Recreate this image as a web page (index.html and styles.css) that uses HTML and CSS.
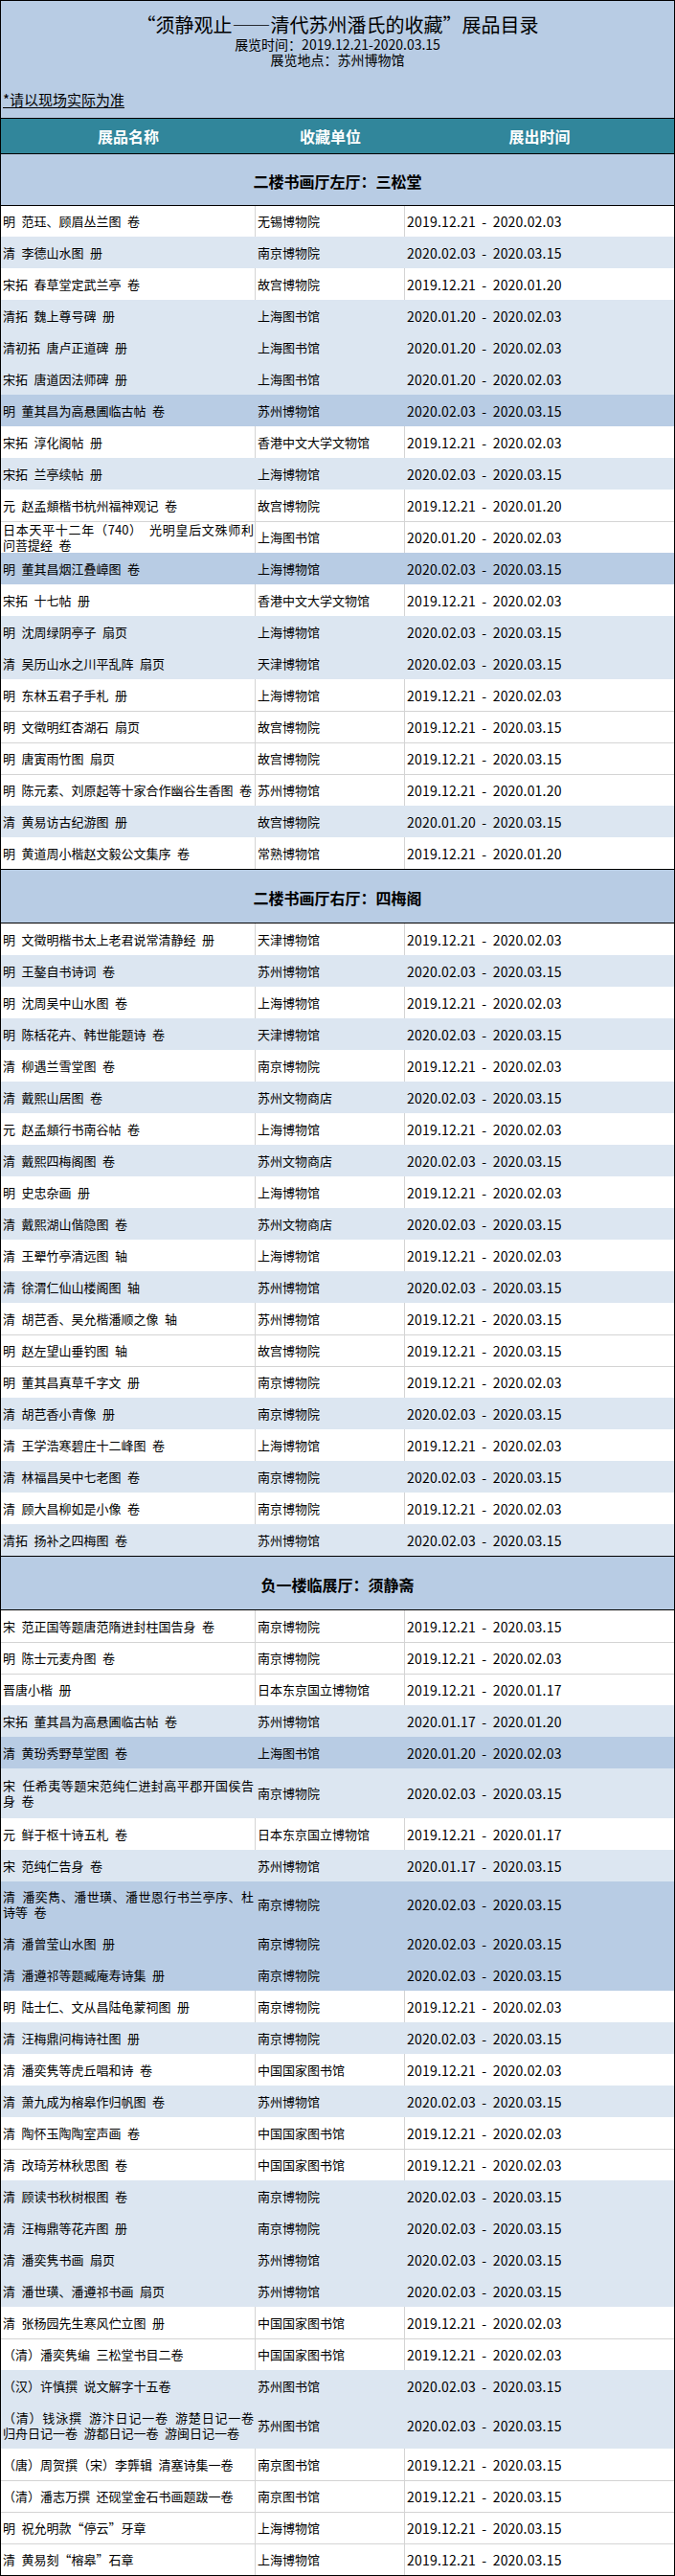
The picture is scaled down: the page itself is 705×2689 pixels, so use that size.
FILE: index.html
```html
<!DOCTYPE html>
<html lang="zh-CN">
<head>
<meta charset="utf-8">
<title>须静观止——清代苏州潘氏的收藏 展品目录</title>
<link rel="stylesheet" href="styles.css">
</head>
<body>
<div class="sheet">
  <div class="top">
    <div class="title">“须静观止——清代苏州潘氏的收藏”展品目录</div>
    <div class="sub">展览时间：2019.12.21-2020.03.15</div>
    <div class="sub">展览地点：苏州博物馆</div>
    <div class="note">*请以现场实际为准</div>
  </div>
  <div class="colhead"><div>展品名称</div><div>收藏单位</div><div>展出时间</div></div>

  <div class="sec s1">二楼书画厅左厅：三松堂</div>
  <div class="r w first"><div class="c n">明 范珏、顾眉丛兰图 卷</div><div class="c o">无锡博物院</div><div class="c d">2019.12.21 - 2020.02.03</div></div>
  <div class="r l"><div class="c n">清 李德山水图 册</div><div class="c o">南京博物院</div><div class="c d">2020.02.03 - 2020.03.15</div></div>
  <div class="r w"><div class="c n">宋拓 春草堂定武兰亭 卷</div><div class="c o">故宫博物院</div><div class="c d">2019.12.21 - 2020.01.20</div></div>
  <div class="r l"><div class="c n">清拓 魏上尊号碑 册</div><div class="c o">上海图书馆</div><div class="c d">2020.01.20 - 2020.02.03</div></div>
  <div class="r l"><div class="c n">清初拓 唐卢正道碑 册</div><div class="c o">上海图书馆</div><div class="c d">2020.01.20 - 2020.02.03</div></div>
  <div class="r l"><div class="c n">宋拓 唐道因法师碑 册</div><div class="c o">上海图书馆</div><div class="c d">2020.01.20 - 2020.02.03</div></div>
  <div class="r m"><div class="c n">明 董其昌为高悬圃临古帖 卷</div><div class="c o">苏州博物馆</div><div class="c d">2020.02.03 - 2020.03.15</div></div>
  <div class="r w"><div class="c n">宋拓 淳化阁帖 册</div><div class="c o">香港中文大学文物馆</div><div class="c d">2019.12.21 - 2020.02.03</div></div>
  <div class="r l"><div class="c n">宋拓 兰亭续帖 册</div><div class="c o">上海博物馆</div><div class="c d">2020.02.03 - 2020.03.15</div></div>
  <div class="r w"><div class="c n">元 赵孟頫楷书杭州福神观记 卷</div><div class="c o">故宫博物院</div><div class="c d">2019.12.21 - 2020.01.20</div></div>
  <div class="r w"><div class="c n j"><span>日本天平十二年（740） 光明皇后文殊师利</span><span>问菩提经 卷</span></div><div class="c o">上海图书馆</div><div class="c d">2020.01.20 - 2020.02.03</div></div>
  <div class="r m"><div class="c n">明 董其昌烟江叠嶂图 卷</div><div class="c o">上海博物馆</div><div class="c d">2020.02.03 - 2020.03.15</div></div>
  <div class="r w"><div class="c n">宋拓 十七帖 册</div><div class="c o">香港中文大学文物馆</div><div class="c d">2019.12.21 - 2020.02.03</div></div>
  <div class="r l"><div class="c n">明 沈周绿阴亭子 扇页</div><div class="c o">上海博物馆</div><div class="c d">2020.02.03 - 2020.03.15</div></div>
  <div class="r l"><div class="c n">清 吴历山水之川平乱阵 扇页</div><div class="c o">天津博物馆</div><div class="c d">2020.02.03 - 2020.03.15</div></div>
  <div class="r w"><div class="c n">明 东林五君子手札 册</div><div class="c o">上海博物馆</div><div class="c d">2019.12.21 - 2020.02.03</div></div>
  <div class="r w"><div class="c n">明 文徵明红杏湖石 扇页</div><div class="c o">故宫博物院</div><div class="c d">2019.12.21 - 2020.03.15</div></div>
  <div class="r w"><div class="c n">明 唐寅雨竹图 扇页</div><div class="c o">故宫博物院</div><div class="c d">2019.12.21 - 2020.03.15</div></div>
  <div class="r w"><div class="c n">明 陈元素、刘原起等十家合作幽谷生香图 卷</div><div class="c o">苏州博物馆</div><div class="c d">2019.12.21 - 2020.01.20</div></div>
  <div class="r l"><div class="c n">清 黄易访古纪游图 册</div><div class="c o">故宫博物院</div><div class="c d">2020.01.20 - 2020.03.15</div></div>
  <div class="r w"><div class="c n">明 黄道周小楷赵文毅公文集序 卷</div><div class="c o">常熟博物馆</div><div class="c d">2019.12.21 - 2020.01.20</div></div>

  <div class="sec s2">二楼书画厅右厅：四梅阁</div>
  <div class="r w"><div class="c n">明 文徵明楷书太上老君说常清静经 册</div><div class="c o">天津博物馆</div><div class="c d">2019.12.21 - 2020.02.03</div></div>
  <div class="r l"><div class="c n">明 王鏊自书诗词 卷</div><div class="c o">苏州博物馆</div><div class="c d">2020.02.03 - 2020.03.15</div></div>
  <div class="r w"><div class="c n">明 沈周吴中山水图 卷</div><div class="c o">上海博物馆</div><div class="c d">2019.12.21 - 2020.02.03</div></div>
  <div class="r l"><div class="c n">明 陈栝花卉、韩世能题诗 卷</div><div class="c o">天津博物馆</div><div class="c d">2020.02.03 - 2020.03.15</div></div>
  <div class="r w"><div class="c n">清 柳遇兰雪堂图 卷</div><div class="c o">南京博物院</div><div class="c d">2019.12.21 - 2020.02.03</div></div>
  <div class="r l"><div class="c n">清 戴熙山居图 卷</div><div class="c o">苏州文物商店</div><div class="c d">2020.02.03 - 2020.03.15</div></div>
  <div class="r w"><div class="c n">元 赵孟頫行书南谷帖 卷</div><div class="c o">上海博物馆</div><div class="c d">2019.12.21 - 2020.02.03</div></div>
  <div class="r l"><div class="c n">清 戴熙四梅阁图 卷</div><div class="c o">苏州文物商店</div><div class="c d">2020.02.03 - 2020.03.15</div></div>
  <div class="r w"><div class="c n">明 史忠杂画 册</div><div class="c o">上海博物馆</div><div class="c d">2019.12.21 - 2020.02.03</div></div>
  <div class="r l"><div class="c n">清 戴熙湖山偕隐图 卷</div><div class="c o">苏州文物商店</div><div class="c d">2020.02.03 - 2020.03.15</div></div>
  <div class="r w"><div class="c n">清 王翚竹亭清远图 轴</div><div class="c o">上海博物馆</div><div class="c d">2019.12.21 - 2020.02.03</div></div>
  <div class="r l"><div class="c n">清 徐渭仁仙山楼阁图 轴</div><div class="c o">苏州博物馆</div><div class="c d">2020.02.03 - 2020.03.15</div></div>
  <div class="r w"><div class="c n">清 胡芑香、吴允楷潘顺之像 轴</div><div class="c o">苏州博物馆</div><div class="c d">2019.12.21 - 2020.03.15</div></div>
  <div class="r w"><div class="c n">明 赵左望山垂钓图 轴</div><div class="c o">故宫博物院</div><div class="c d">2019.12.21 - 2020.03.15</div></div>
  <div class="r w"><div class="c n">明 董其昌真草千字文 册</div><div class="c o">南京博物院</div><div class="c d">2019.12.21 - 2020.02.03</div></div>
  <div class="r l"><div class="c n">清 胡芑香小青像 册</div><div class="c o">南京博物院</div><div class="c d">2020.02.03 - 2020.03.15</div></div>
  <div class="r w"><div class="c n">清 王学浩寒碧庄十二峰图 卷</div><div class="c o">上海博物馆</div><div class="c d">2019.12.21 - 2020.02.03</div></div>
  <div class="r l"><div class="c n">清 林福昌吴中七老图 卷</div><div class="c o">南京博物院</div><div class="c d">2020.02.03 - 2020.03.15</div></div>
  <div class="r w"><div class="c n">清 顾大昌柳如是小像 卷</div><div class="c o">南京博物院</div><div class="c d">2019.12.21 - 2020.02.03</div></div>
  <div class="r l"><div class="c n">清拓 扬补之四梅图 卷</div><div class="c o">苏州博物馆</div><div class="c d">2020.02.03 - 2020.03.15</div></div>

  <div class="sec s3">负一楼临展厅：须静斋</div>
  <div class="r w"><div class="c n">宋 范正国等题唐范隋进封柱国告身 卷</div><div class="c o">南京博物院</div><div class="c d">2019.12.21 - 2020.03.15</div></div>
  <div class="r w"><div class="c n">明 陈士元麦舟图 卷</div><div class="c o">南京博物院</div><div class="c d">2019.12.21 - 2020.02.03</div></div>
  <div class="r w"><div class="c n">晋唐小楷 册</div><div class="c o">日本东京国立博物馆</div><div class="c d">2019.12.21 - 2020.01.17</div></div>
  <div class="r l"><div class="c n">宋拓 董其昌为高悬圃临古帖 卷</div><div class="c o">苏州博物馆</div><div class="c d">2020.01.17 - 2020.01.20</div></div>
  <div class="r m"><div class="c n">清 黄玢秀野草堂图 卷</div><div class="c o">上海图书馆</div><div class="c d">2020.01.20 - 2020.02.03</div></div>
  <div class="r l h52"><div class="c n j"><span>宋 任希夷等题宋范纯仁进封高平郡开国侯告</span><span>身 卷</span></div><div class="c o">南京博物院</div><div class="c d">2020.02.03 - 2020.03.15</div></div>
  <div class="r w"><div class="c n">元 鲜于枢十诗五札 卷</div><div class="c o">日本东京国立博物馆</div><div class="c d">2019.12.21 - 2020.01.17</div></div>
  <div class="r l"><div class="c n">宋 范纯仁告身 卷</div><div class="c o">苏州博物馆</div><div class="c d">2020.01.17 - 2020.03.15</div></div>
  <div class="r m h48"><div class="c n j"><span>清 潘奕雋、潘世璜、潘世恩行书兰亭序、杜</span><span>诗等 卷</span></div><div class="c o">南京博物院</div><div class="c d">2020.02.03 - 2020.03.15</div></div>
  <div class="r m"><div class="c n">清 潘曾莹山水图 册</div><div class="c o">南京博物院</div><div class="c d">2020.02.03 - 2020.03.15</div></div>
  <div class="r m"><div class="c n">清 潘遵祁等题臧庵寿诗集 册</div><div class="c o">南京博物院</div><div class="c d">2020.02.03 - 2020.03.15</div></div>
  <div class="r w"><div class="c n">明 陆士仁、文从昌陆龟蒙祠图 册</div><div class="c o">南京博物院</div><div class="c d">2019.12.21 - 2020.02.03</div></div>
  <div class="r l"><div class="c n">清 汪梅鼎问梅诗社图 册</div><div class="c o">南京博物院</div><div class="c d">2020.02.03 - 2020.03.15</div></div>
  <div class="r w"><div class="c n">清 潘奕隽等虎丘唱和诗 卷</div><div class="c o">中国国家图书馆</div><div class="c d">2019.12.21 - 2020.02.03</div></div>
  <div class="r l"><div class="c n">清 萧九成为榕皋作归帆图 卷</div><div class="c o">苏州博物馆</div><div class="c d">2020.02.03 - 2020.03.15</div></div>
  <div class="r w"><div class="c n">清 陶怀玉陶陶室声画 卷</div><div class="c o">中国国家图书馆</div><div class="c d">2019.12.21 - 2020.02.03</div></div>
  <div class="r w"><div class="c n">清 改琦芳林秋思图 卷</div><div class="c o">中国国家图书馆</div><div class="c d">2019.12.21 - 2020.02.03</div></div>
  <div class="r l"><div class="c n">清 顾读书秋树根图 卷</div><div class="c o">南京博物院</div><div class="c d">2020.02.03 - 2020.03.15</div></div>
  <div class="r l"><div class="c n">清 汪梅鼎等花卉图 册</div><div class="c o">南京博物院</div><div class="c d">2020.02.03 - 2020.03.15</div></div>
  <div class="r l"><div class="c n">清 潘奕隽书画 扇页</div><div class="c o">苏州博物馆</div><div class="c d">2020.02.03 - 2020.03.15</div></div>
  <div class="r l"><div class="c n">清 潘世璜、潘遵祁书画 扇页</div><div class="c o">苏州博物馆</div><div class="c d">2020.02.03 - 2020.03.15</div></div>
  <div class="r w"><div class="c n">清 张杨园先生寒风伫立图 册</div><div class="c o">中国国家图书馆</div><div class="c d">2019.12.21 - 2020.02.03</div></div>
  <div class="r w"><div class="c n">（清）潘奕隽编 三松堂书目二卷</div><div class="c o">中国国家图书馆</div><div class="c d">2019.12.21 - 2020.02.03</div></div>
  <div class="r l"><div class="c n">（汉）许慎撰 说文解字十五卷</div><div class="c o">苏州图书馆</div><div class="c d">2020.02.03 - 2020.03.15</div></div>
  <div class="r l h49"><div class="c n j"><span>（清）钱泳撰 游汴日记一卷 游楚日记一卷</span><span>归舟日记一卷 游都日记一卷 游闽日记一卷</span></div><div class="c o">苏州图书馆</div><div class="c d">2020.02.03 - 2020.03.15</div></div>
  <div class="r w"><div class="c n">（唐）周贺撰（宋）李龏辑 清塞诗集一卷</div><div class="c o">南京图书馆</div><div class="c d">2019.12.21 - 2020.03.15</div></div>
  <div class="r w"><div class="c n">（清）潘志万撰 还砚堂金石书画题跋一卷</div><div class="c o">南京图书馆</div><div class="c d">2019.12.21 - 2020.03.15</div></div>
  <div class="r w"><div class="c n">明 祝允明款“停云”牙章</div><div class="c o">上海博物馆</div><div class="c d">2019.12.21 - 2020.03.15</div></div>
  <div class="r w"><div class="c n">清 黄易刻“榕皋”石章</div><div class="c o">上海博物馆</div><div class="c d">2019.12.21 - 2020.03.15</div></div>
</div>
</body>
</html>
```

FILE: styles.css
```css
html, body {
  margin: 0;
  padding: 0;
  background: #ffffff;
}
body {
  font-family: "Noto Sans CJK SC", "Noto Sans", sans-serif;
  color: #000000;
}
.sheet {
  width: 705px;
  box-sizing: border-box;
  border: 1px solid #000000;
}
.top {
  height: 122px;
  background: #b8cce4;
  border-bottom: 1px solid #000000;
  display: flex;
  flex-direction: column;
}
.title {
  margin-top: 13px;
  text-align: center;
  font-size: 20px;
  line-height: 24px;
}
.sub {
  text-align: center;
  font-size: 14px;
  line-height: 16px;
}
.note {
  margin-top: 24px;
  padding-left: 2px;
  font-size: 15px;
  line-height: 20px;
  text-decoration: underline;
  text-underline-offset: 2px;
}
.colhead {
  display: grid;
  grid-template-columns: 266px 156px 1fr;
  height: 36px;
  background: #31869b;
  color: #ffffff;
  font-weight: bold;
  font-size: 16px;
  border-bottom: 1px solid #000000;
}
.colhead > div {
  display: flex;
  align-items: center;
  justify-content: center;
}
.sec {
  height: 53px;
  background: #b8cce4;
  border-bottom: 1px solid #000000;
  display: flex;
  align-items: center;
  justify-content: center;
  font-weight: bold;
  font-size: 16px;
  padding-top: 2px;
  box-sizing: border-box;
}
.sec.s1 {
  height: 54px;
}
.sec.s2, .sec.s3 {
  height: 57px;
  border-top: 1px solid #000000;
}
.r {
  display: grid;
  grid-template-columns: 266px 156px 1fr;
  height: 33px;
  box-sizing: border-box;
}
.r.first { height: 32px; }
.r.h52 { height: 52px; }
.r.h48 { height: 48px; }
.r.h49 { height: 49px; }
.w { background: #ffffff; }
.l { background: #dce6f1; }
.m { background: #b8cce4; }
.w + .w { border-top: 1px solid #d4d4d4; }
.c {
  display: flex;
  align-items: center;
  box-sizing: border-box;
  padding-left: 2px;
  border-right: 1px solid transparent;
  font-size: 13px;
  line-height: 16px;
  white-space: nowrap;
  min-width: 0;
}
.d { border-right: 0; }
.w .n, .w .o { border-right-color: #d4d4d4; }
.n { word-spacing: 3.6px; padding-right: 1px; }
.j {
  flex-direction: column;
  align-items: stretch;
  justify-content: center;
  white-space: normal;
}
.j > span { display: block; white-space: nowrap; }
.j > span:first-child {
  text-align: justify;
  text-align-last: justify;
  white-space: normal;
}
.d {
  font-size: 14px;
  letter-spacing: 0.2px;
  word-spacing: 3px;
  white-space: pre;
}
```
